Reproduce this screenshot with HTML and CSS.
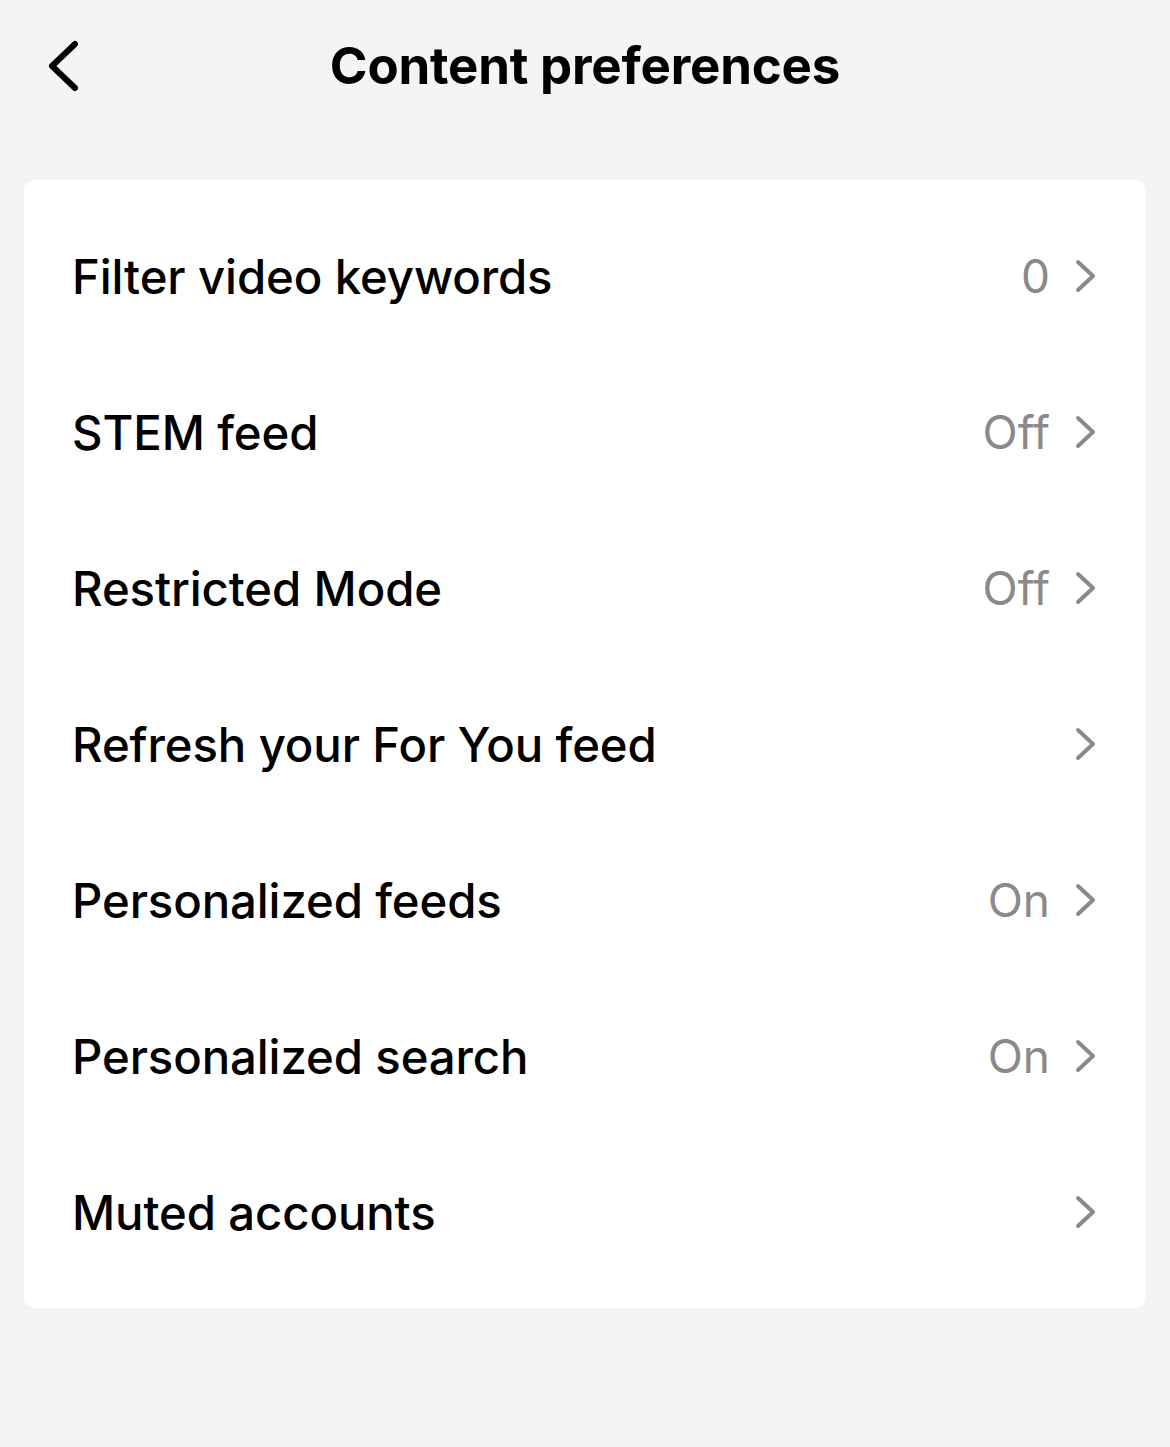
FILE: index.html
```html
<!DOCTYPE html>
<html>
<head>
<meta charset="utf-8">
<link rel="stylesheet" href="styles.css">
</head>
<body>
<div class="page">
  <header class="topbar">
    <button class="back" aria-label="Back">
      <svg width="36" height="52" viewBox="0 0 36 52"><path d="M31 4 L8 26 L31 48" fill="none" stroke="#000" stroke-width="6" stroke-linecap="round" stroke-linejoin="round"/></svg>
    </button>
    <h1 class="title">Content preferences</h1>
  </header>
  <div class="card">
    <div class="row"><span class="label">Filter video keywords</span><span class="value">0</span><svg class="chev" width="24" height="36" viewBox="0 0 24 36"><path d="M4 4 L19 18 L4 32" fill="none" stroke="#8a8a8a" stroke-width="4" stroke-linecap="round" stroke-linejoin="round"/></svg></div>
    <div class="row"><span class="label">STEM feed</span><span class="value">Off</span><svg class="chev" width="24" height="36" viewBox="0 0 24 36"><path d="M4 4 L19 18 L4 32" fill="none" stroke="#8a8a8a" stroke-width="4" stroke-linecap="round" stroke-linejoin="round"/></svg></div>
    <div class="row"><span class="label">Restricted Mode</span><span class="value">Off</span><svg class="chev" width="24" height="36" viewBox="0 0 24 36"><path d="M4 4 L19 18 L4 32" fill="none" stroke="#8a8a8a" stroke-width="4" stroke-linecap="round" stroke-linejoin="round"/></svg></div>
    <div class="row"><span class="label">Refresh your For You feed</span><span class="value"></span><svg class="chev" width="24" height="36" viewBox="0 0 24 36"><path d="M4 4 L19 18 L4 32" fill="none" stroke="#8a8a8a" stroke-width="4" stroke-linecap="round" stroke-linejoin="round"/></svg></div>
    <div class="row"><span class="label">Personalized feeds</span><span class="value">On</span><svg class="chev" width="24" height="36" viewBox="0 0 24 36"><path d="M4 4 L19 18 L4 32" fill="none" stroke="#8a8a8a" stroke-width="4" stroke-linecap="round" stroke-linejoin="round"/></svg></div>
    <div class="row"><span class="label">Personalized search</span><span class="value">On</span><svg class="chev" width="24" height="36" viewBox="0 0 24 36"><path d="M4 4 L19 18 L4 32" fill="none" stroke="#8a8a8a" stroke-width="4" stroke-linecap="round" stroke-linejoin="round"/></svg></div>
    <div class="row"><span class="label">Muted accounts</span><span class="value"></span><svg class="chev" width="24" height="36" viewBox="0 0 24 36"><path d="M4 4 L19 18 L4 32" fill="none" stroke="#8a8a8a" stroke-width="4" stroke-linecap="round" stroke-linejoin="round"/></svg></div>
  </div>
</div>
</body>
</html>
```
FILE: styles.css
```css
html, body {
  margin: 0;
  padding: 0;
  background: #f4f4f4;
  font-family: Inter, "Noto Sans", sans-serif;
  color: #000;
}
.page {
  width: 1170px;
  height: 1447px;
  box-sizing: border-box;
  padding: 0 24px;
}
.topbar {
  position: relative;
  height: 130px;
  display: flex;
  align-items: center;
  justify-content: center;
  margin-bottom: 50px;
}
.back {
  position: absolute;
  left: 20px;
  top: 40px;
  background: none;
  border: 0;
  padding: 0;
  display: flex;
}
.title {
  margin: 0;
  font-size: 51px;
  font-weight: 700;
  letter-spacing: -0.2px;
}
.card {
  background: #fff;
  border-radius: 10px;
  padding: 18px 0;
}
.row {
  height: 156px;
  display: flex;
  align-items: center;
  padding: 0 48px 0 48px;
}
.label {
  flex: 1;
  font-size: 47.3px;
  font-weight: 500;
  letter-spacing: -0.1px;
}
.value {
  font-size: 46px;
  color: #8a8a8a;
  margin-right: 24px;
}
.chev {
  display: block;
}
```
